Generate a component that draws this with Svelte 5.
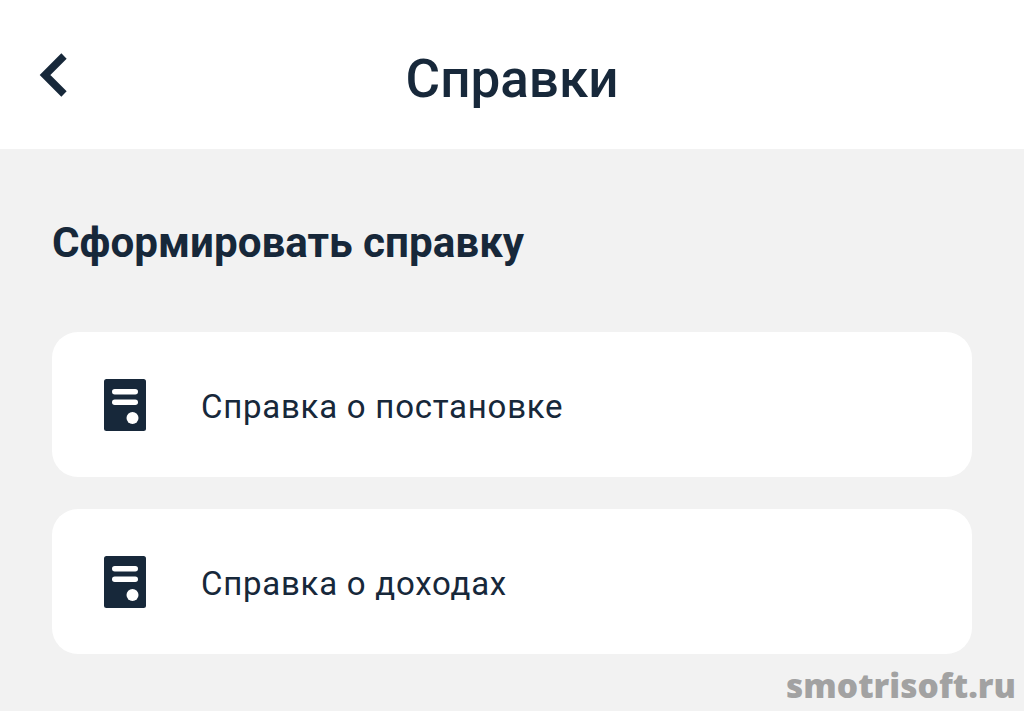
<script>
	const items = ['Справка о постановке', 'Справка о доходах'];
</script>

<div class="page">
	<header class="top">
		<button type="button" class="back" aria-label="Назад">
			<svg width="32" height="48" viewBox="0 0 32 48" fill="none">
				<path d="M26 5 L7 24 L26 43" stroke="#17283a" stroke-width="7.5" stroke-linejoin="miter" />
			</svg>
		</button>
		<h1>Справки</h1>
	</header>

	<main>
		<h2>Сформировать справку</h2>
		<div class="list">
			{#each items as item}
				<div class="card">
					<svg class="doc" width="42" height="52" viewBox="0 0 42 52">
						<rect width="42" height="52" rx="2.5" fill="#17283a" />
						<rect x="8" y="10" width="26" height="5.5" rx="2.75" fill="#fff" />
						<rect x="8" y="20.5" width="26" height="5.5" rx="2.75" fill="#fff" />
						<circle cx="28.5" cy="39" r="6" fill="#fff" />
					</svg>
					<span>{item}</span>
				</div>
			{/each}
		</div>
	</main>

	<div class="mark">smotrisoft.ru</div>
</div>

<style>
	:global(body) {
		margin: 0;
	}
	.page {
		position: relative;
		height: 711px;
		overflow: hidden;
		background: #f2f2f2;
		color: #17283a;
		font-family: Roboto, 'Noto Sans', sans-serif;
	}
	.top {
		position: relative;
		height: 149px;
		display: flex;
		align-items: center;
		justify-content: center;
		background: #fff;
	}
	.back {
		position: absolute;
		left: 38px;
		top: 51px;
		padding: 0;
		border: none;
		background: none;
		line-height: 0;
	}
	h1 {
		margin: 0 0 -8px;
		font-size: 53px;
		font-weight: 500;
		line-height: 60px;
	}
	main {
		padding: 69px 52px 0;
	}
	h2 {
		margin: 0 0 64px;
		font-size: 42.2px;
		font-weight: 700;
		line-height: 50px;
	}
	.list {
		display: flex;
		flex-direction: column;
		gap: 32px;
	}
	.card {
		height: 145px;
		display: flex;
		align-items: center;
		gap: 55px;
		padding-left: 52px;
		background: #fff;
		border-radius: 26px;
	}
	.doc {
		flex: none;
	}
	.card span {
		padding-top: 4px;
		font-size: 33px;
		line-height: 40px;
		letter-spacing: 0.75px;
	}
	.mark {
		position: absolute;
		right: 8px;
		bottom: 6px;
		font-family: 'Open Sans', sans-serif;
		font-size: 33.5px;
		font-weight: 800;
		line-height: 40px;
		color: #a2a2a2;
	}
</style>
